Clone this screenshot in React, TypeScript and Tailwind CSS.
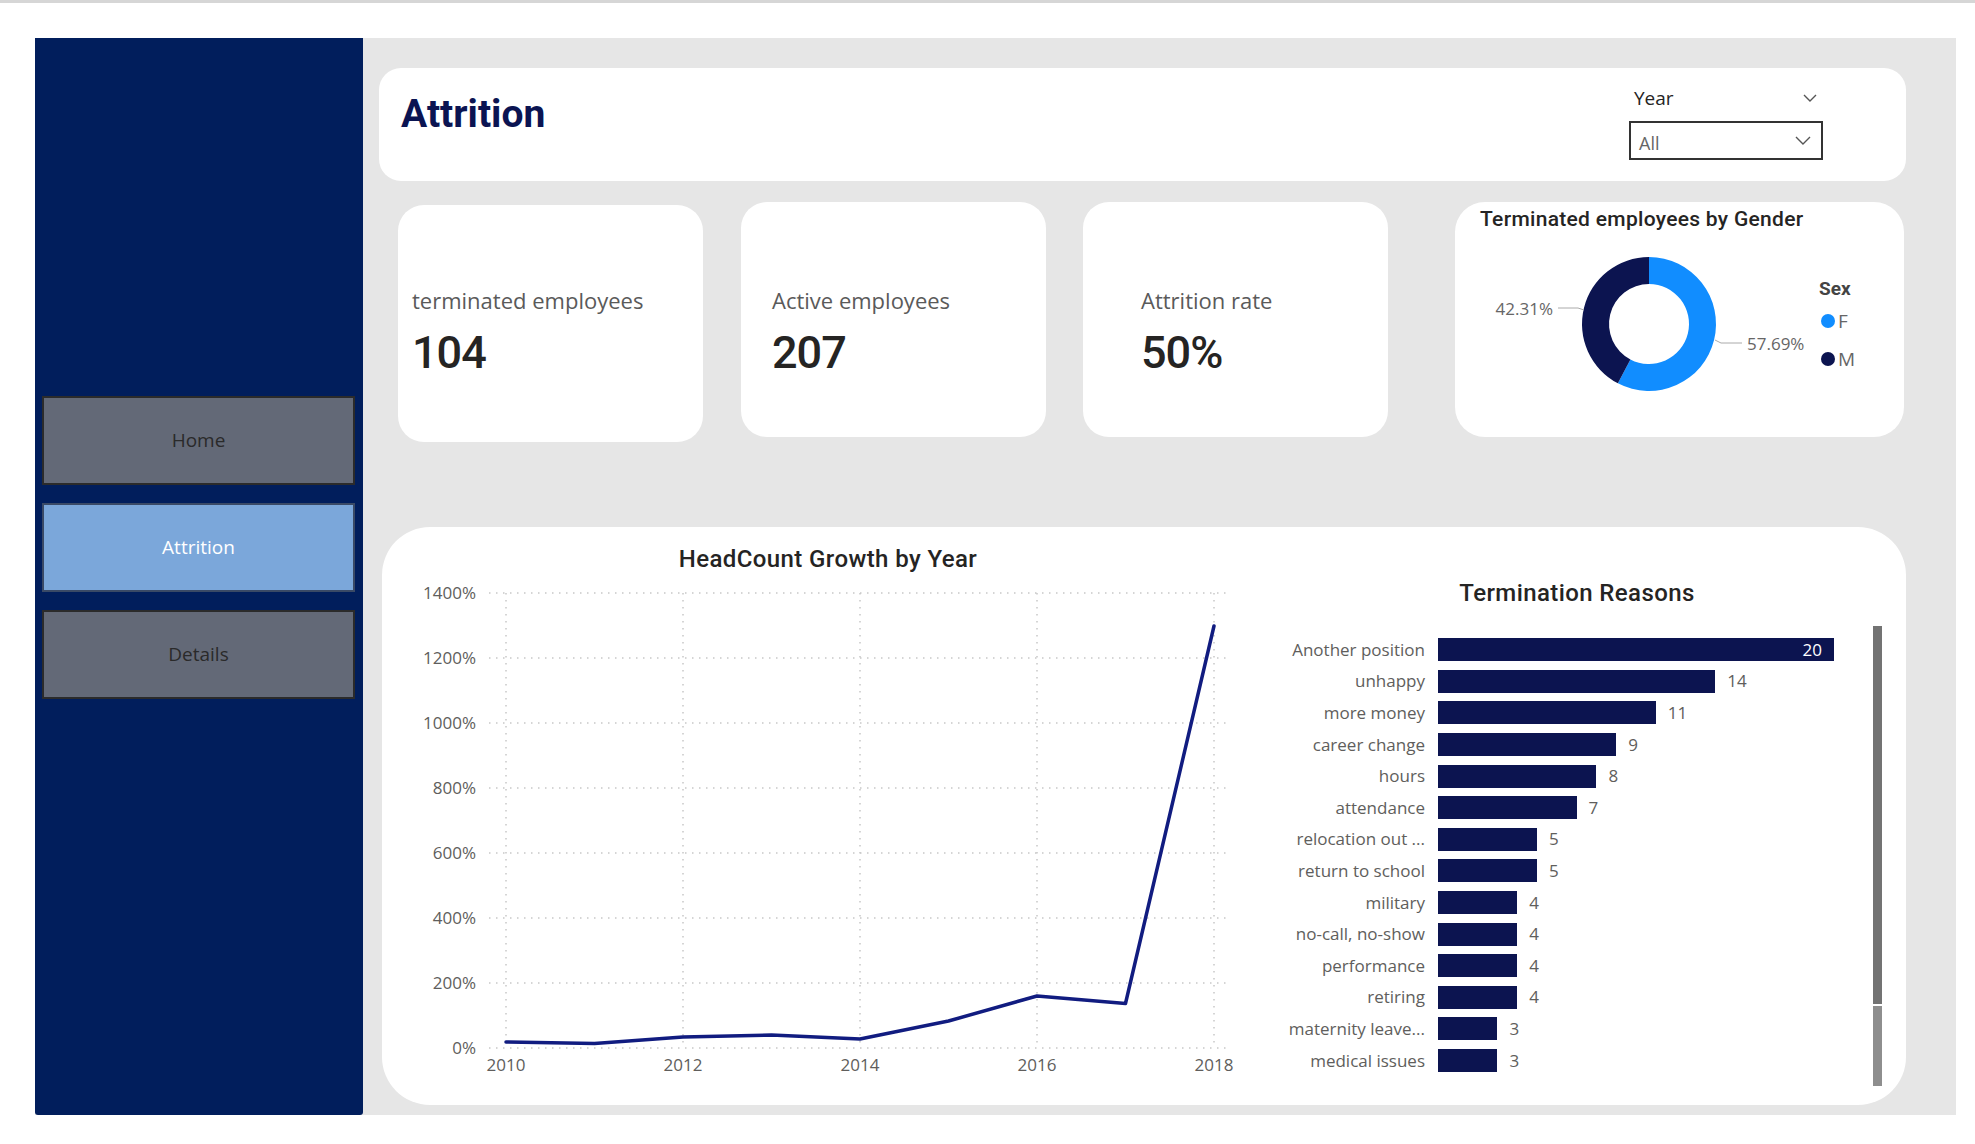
import React from "react";

const reasons: [string, number][] = [
  ["Another position", 20],
  ["unhappy", 14],
  ["more money", 11],
  ["career change", 9],
  ["hours", 8],
  ["attendance", 7],
  ["relocation out ...", 5],
  ["return to school", 5],
  ["military", 4],
  ["no-call, no-show", 4],
  ["performance", 4],
  ["retiring", 4],
  ["maternity leave...", 3],
  ["medical issues", 3],
];

const years = [2010, 2011, 2012, 2013, 2014, 2015, 2016, 2017, 2018];
const lineY = [471, 472.5, 466, 464, 468, 450, 425, 432.5, 55];

function Chevron({ w = 16, color = "#444" }: { w?: number; color?: string }) {
  return (
    <svg width={w} height={w / 2 + 1} viewBox={`0 0 ${w} ${w / 2 + 1}`}>
      <polyline points={`1,1 ${w / 2},${w / 2} ${w - 1},1`} fill="none" stroke={color} strokeWidth="1.4" />
    </svg>
  );
}

function KpiCard({ label, value, pl, extra, mt }: { label: string; value: string; pl: string; extra: string; mt: string }) {
  return (
    <div className={`w-[305px] h-[235px] bg-white rounded-[26px] flex flex-col ${pl} ${extra}`}>
      <div className={`${mt} h-[30px] leading-[30px] text-[22px] text-[#5a5a5a] font-['Open_Sans']`}>{label}</div>
      <div className="mt-[14px] h-[48px] leading-[48px] text-[45px] font-medium tracking-[-1px] text-[#252423] font-['Roboto']">
        {value}
      </div>
    </div>
  );
}

function DonutCard() {
  return (
    <div className="ml-[67px] w-[449px] h-[235px] bg-white rounded-[30px] flex flex-col">
      <div className="pl-[25px] pt-[4px] h-[28px] leading-[26px] text-[21px] tracking-[0.3px] font-medium text-[#252423] font-['Roboto']">
        Terminated employees by Gender
      </div>
      <svg width="449" height="200" viewBox="0 0 449 200" className="block">
        <path d="M194 27 A67 67 0 1 1 162.86 153.32 L175.41 129.41 A40 40 0 1 0 194 54 Z" fill="#118dff" />
        <path d="M162.86 153.32 A67 67 0 0 1 194 27 L194 54 A40 40 0 0 0 175.41 129.41 Z" fill="#0c1450" />
        <path d="M103 78 L123 78 L129 80" fill="none" stroke="#aaa" strokeWidth="1" />
        <path d="M260 110 L266 113 L287 113" fill="none" stroke="#aaa" strokeWidth="1" />
        <text x="98" y="85" textAnchor="end" fontSize="17" fill="#666" fontFamily="Open Sans">42.31%</text>
        <text x="292" y="120" fontSize="17" fill="#666" fontFamily="Open Sans">57.69%</text>
        <text x="364" y="65" fontSize="19" fontWeight="700" fill="#444" fontFamily="Roboto">Sex</text>
        <circle cx="373" cy="91" r="7" fill="#118dff" />
        <text x="383" y="98" fontSize="19" fill="#666" fontFamily="Open Sans">F</text>
        <circle cx="373" cy="129" r="7" fill="#0c1450" />
        <text x="383" y="136" fontSize="19" fill="#666" fontFamily="Open Sans">M</text>
      </svg>
    </div>
  );
}

function LineChart() {
  const xOf = (i: number) => 124 + i * 88.5;
  const grid = [1400, 1200, 1000, 800, 600, 400, 200, 0];
  const yOf = (v: number) => 477 - (v / 1400) * 455;
  const pts = lineY.map((y, i) => `${xOf(i)},${y}`).join(" ");
  return (
    <div className="w-[892px] flex flex-col">
      <div className="pt-[19px] h-[44px] leading-[26px] text-center text-[24px] tracking-[0.4px] font-medium text-[#252423] font-['Roboto']">
        HeadCount Growth by Year
      </div>
      <svg width="892" height="534" viewBox="0 0 892 534" className="block">
        {grid.map((g) => (
          <g key={g}>
            <line x1="107" x2="844" y1={yOf(g)} y2={yOf(g)} stroke="#c8c8c8" strokeWidth="1.5" strokeDasharray="1.5 5.5" />
            <text x="94" y={yOf(g) + 6} textAnchor="end" fontSize="17" fill="#605e5c" fontFamily="Open Sans">
              {g}%
            </text>
          </g>
        ))}
        {[0, 2, 4, 6, 8].map((i) => (
          <g key={i}>
            <line x1={xOf(i)} x2={xOf(i)} y1="22" y2="477" stroke="#c8c8c8" strokeWidth="1.5" strokeDasharray="1.5 5.5" />
            <text x={xOf(i)} y="500" textAnchor="middle" fontSize="17" fill="#605e5c" fontFamily="Open Sans">
              {years[i]}
            </text>
          </g>
        ))}
        <polyline points={pts} fill="none" stroke="#111c80" strokeWidth="3.5" strokeLinejoin="round" strokeLinecap="round" />
      </svg>
    </div>
  );
}

function BarChart() {
  return (
    <div className="relative flex-1 flex flex-col">
      <div className="pt-[52px] h-[80px] leading-[28px] text-center text-[24px] tracking-[0.4px] font-medium text-[#252423] font-['Roboto'] pr-[26px]">
        Termination Reasons
      </div>
      <div className="mt-[27px] flex flex-col">
        {reasons.map(([name, v]) => (
          <div key={name} className="h-[31.6px] flex items-center">
            <div className="w-[151px] text-right text-[17px] leading-[22px] text-[#605e5c] font-['Open_Sans'] whitespace-nowrap">
              {name}
            </div>
            <div className="ml-[13px] flex items-center">
              <div
                className="h-[23px] bg-[#0c1450] flex items-center justify-end"
                style={{ width: `${v * 19.8}px` }}
              >
                {v === 20 && (
                  <span className="pr-[12px] text-[17px] text-white font-['Open_Sans'] leading-[22px]">{v}</span>
                )}
              </div>
              {v !== 20 && (
                <span className="ml-[12px] text-[17px] text-[#605e5c] font-['Open_Sans'] leading-[22px]">{v}</span>
              )}
            </div>
          </div>
        ))}
      </div>
      <div className="absolute left-[599px] top-[99px] w-[9px] h-[460px] flex flex-col">
        <div className="h-[378px] bg-[#737373]" />
        <div className="mt-[2px] flex-1 bg-[#8e8e8e]" />
      </div>
    </div>
  );
}

export default function App() {
  return (
    <div className="w-[1975px] h-[1144px] bg-white border-t-[3px] border-[#d6d6d6] pt-[35px] pl-[35px] overflow-hidden">
      <div className="flex w-[1921px] h-[1077px] bg-[#e6e6e6]">
        <aside className="w-[328px] h-full bg-[#011e5c] rounded-b-[3px] pt-[358px] pl-[7px] pr-[8px] flex flex-col gap-[18px]">
          <div className="h-[89px] bg-[#636977] border-2 border-[#2b2b2b] flex items-center justify-center text-[19px] text-[#2a2a2a] font-['Open_Sans']">
            Home
          </div>
          <div className="h-[89px] bg-[#7ba7da] border-2 border-[#3a4a66] flex items-center justify-center text-[19px] text-white font-['Open_Sans']">
            Attrition
          </div>
          <div className="h-[89px] bg-[#636977] border-2 border-[#2b2b2b] flex items-center justify-center text-[19px] text-[#2a2a2a] font-['Open_Sans']">
            Details
          </div>
        </aside>
        <main className="flex-1 flex flex-col">
          <header className="mt-[30px] ml-[16px] w-[1527px] h-[113px] bg-white rounded-[22px] flex items-start pl-[22px] pr-[83px]">
            <h1 className="mt-[25px] text-[39px] leading-[42px] font-bold text-[#0b1452] font-['Roboto']">Attrition</h1>
            <div className="ml-auto w-[194px] flex flex-col">
              <div className="mt-[17px] h-[26px] flex items-center justify-between pl-[5px] pr-[6px]">
                <span className="text-[19px] font-medium text-[#252423] font-['Open_Sans'] leading-[26px]">Year</span>
                <Chevron w={14} color="#555" />
              </div>
              <div className="mt-[10px] h-[39px] border-2 border-[#333] flex items-center justify-between pl-[8px] pr-[10px]">
                <span className="text-[18px] text-[#666] font-['Open_Sans'] leading-[24px] pt-[4px]">All</span>
                <Chevron w={16} color="#555" />
              </div>
            </div>
          </header>
          <div className="mt-[21px] h-[240px] flex items-start">
            <KpiCard label="terminated employees" value="104" pl="pl-[14px]" extra="ml-[35px] mt-[3px] h-[237px]" mt="mt-[80px]" />
            <KpiCard label="Active employees" value="207" pl="pl-[31px]" extra="ml-[38px]" mt="mt-[83px]" />
            <KpiCard label="Attrition rate" value="50%" pl="pl-[58px]" extra="ml-[37px]" mt="mt-[83px]" />
            <DonutCard />
          </div>
          <section className="mt-[85px] ml-[19px] w-[1524px] h-[578px] bg-white rounded-[48px] flex">
            <LineChart />
            <BarChart />
          </section>
        </main>
      </div>
    </div>
  );
}
